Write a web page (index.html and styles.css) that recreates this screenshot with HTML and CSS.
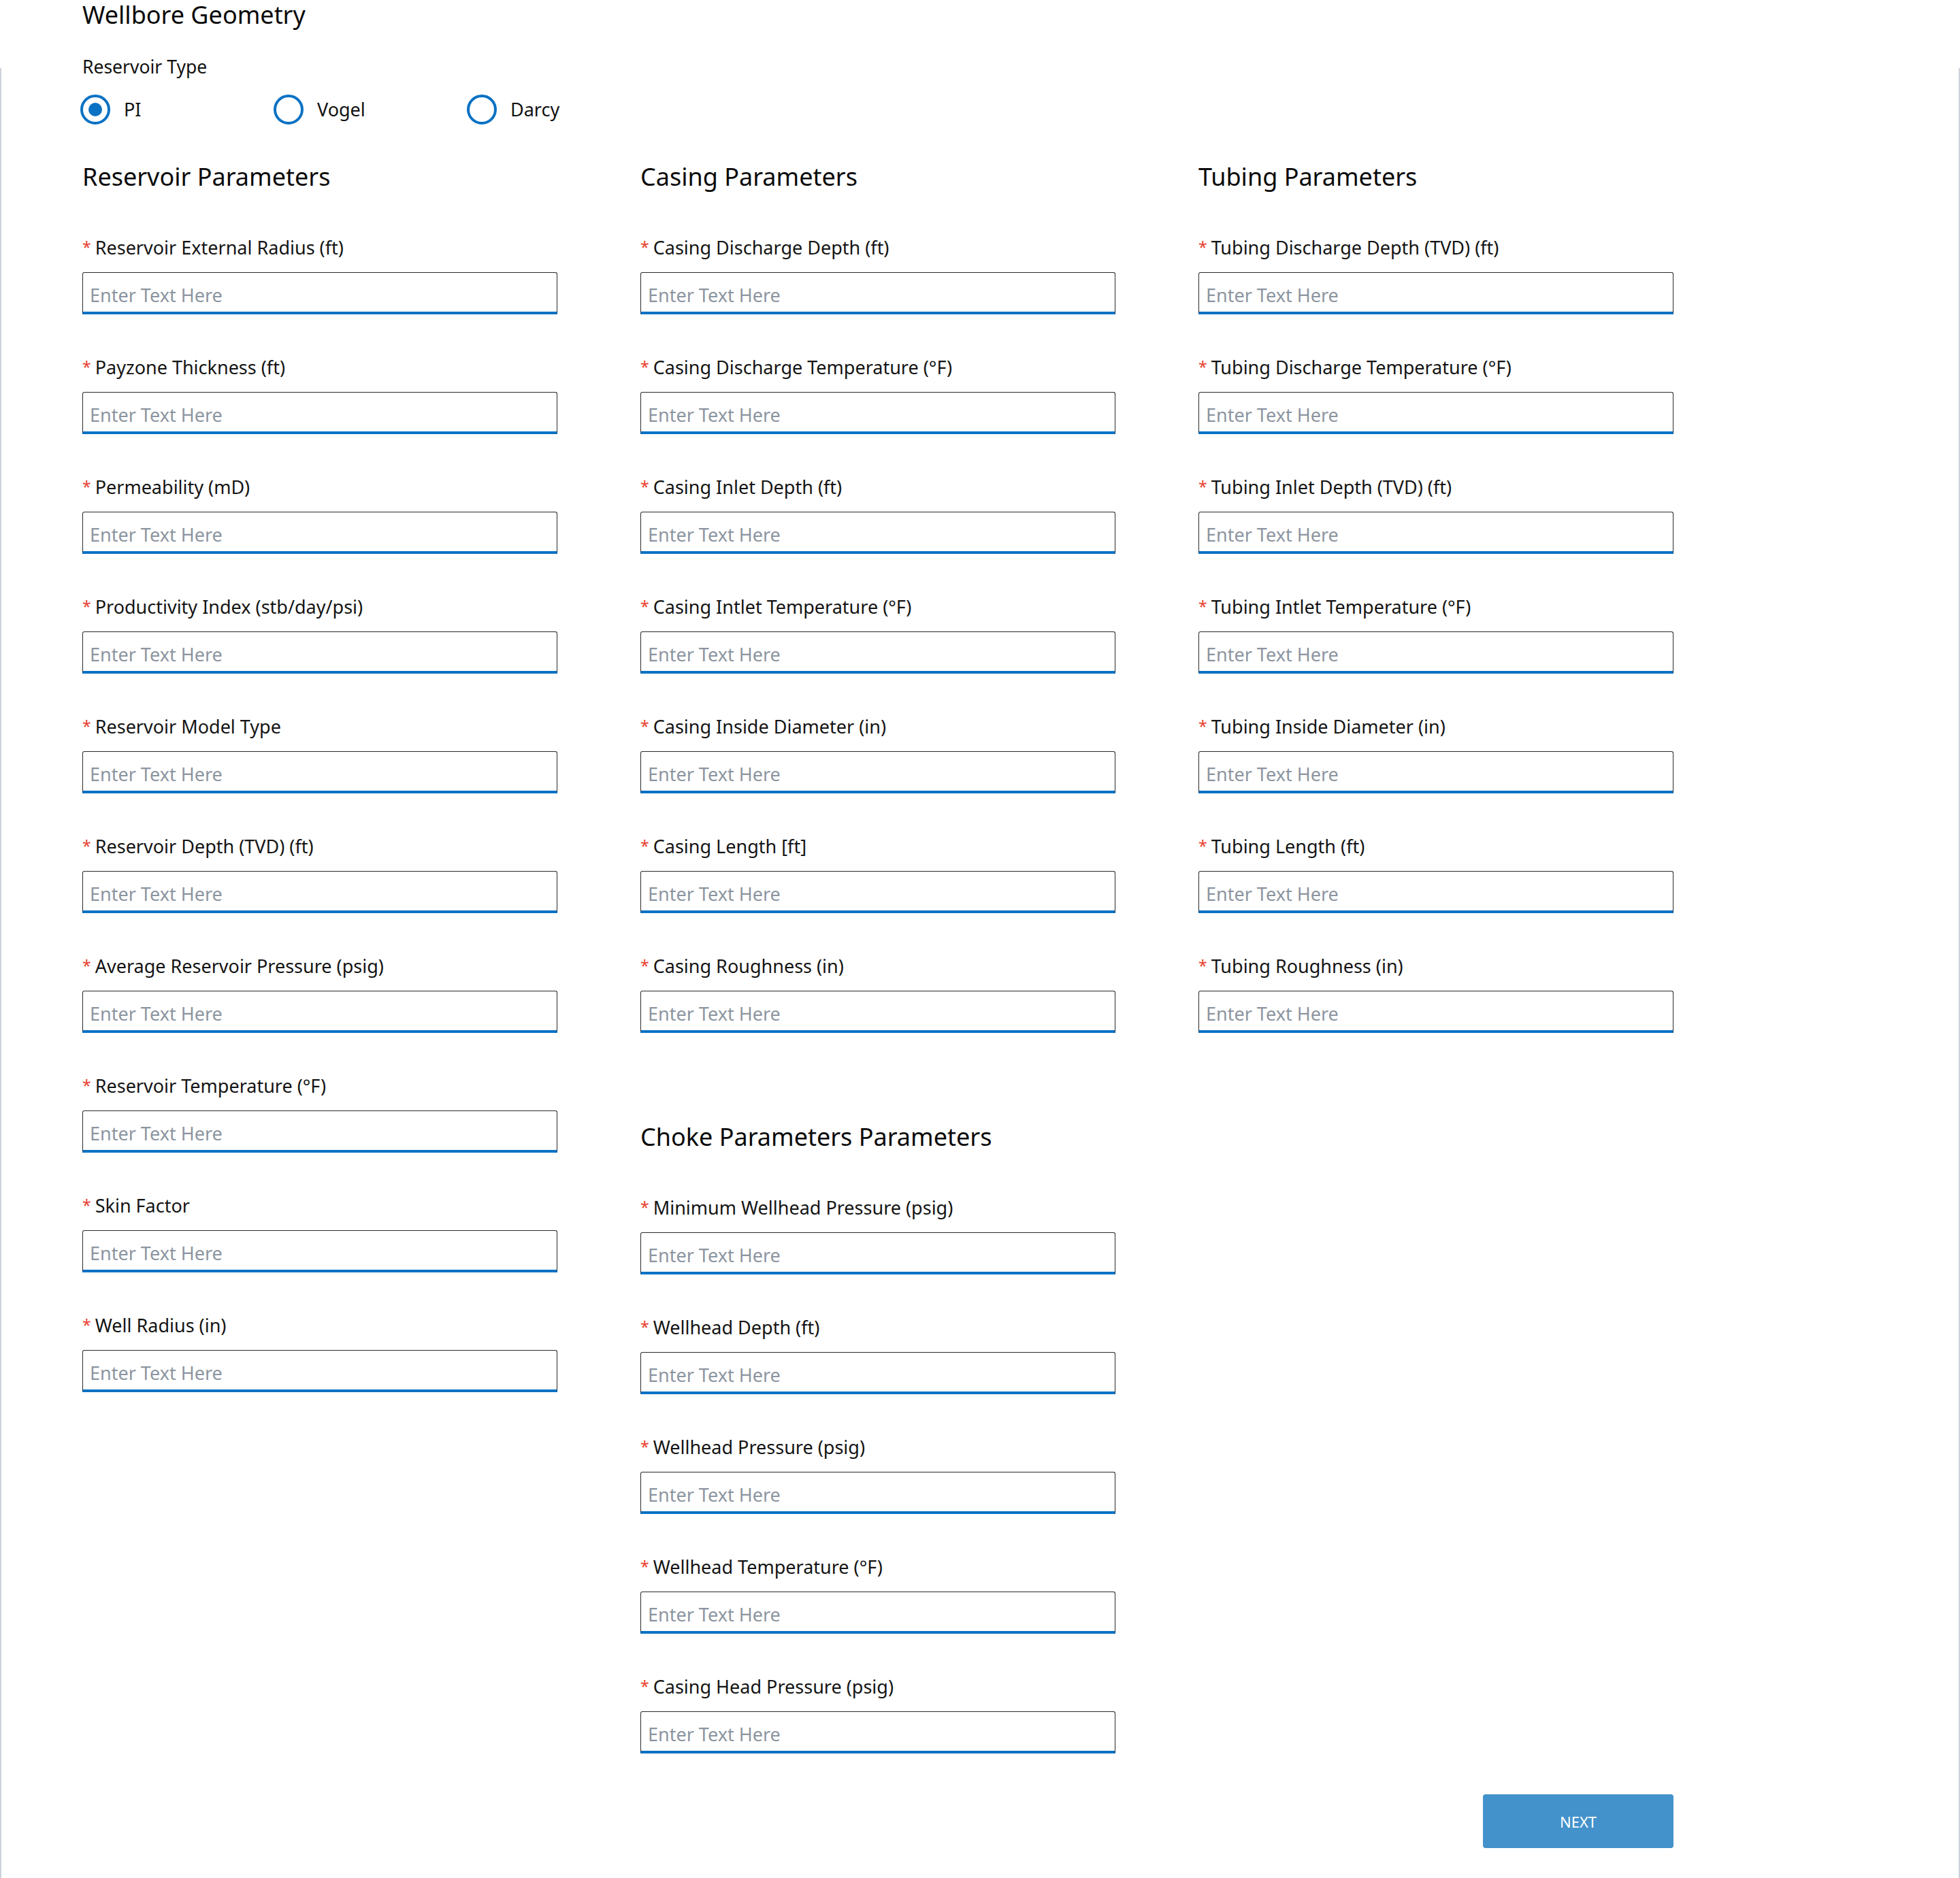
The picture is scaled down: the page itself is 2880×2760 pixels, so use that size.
FILE: index.html
```html
<!DOCTYPE html>
<html lang="en">
<head>
<meta charset="utf-8">
<title>Wellbore Geometry</title>
<link rel="stylesheet" href="styles.css">
</head>
<body>
<div class="page">
  <h1 class="title">Wellbore Geometry</h1>
  <div class="type-label">Reservoir Type</div>
  <div class="radios">
    <label class="radio-item"><span class="radio checked"><span class="dot"></span></span><span class="radio-text">PI</span></label>
    <label class="radio-item"><span class="radio"></span><span class="radio-text">Vogel</span></label>
    <label class="radio-item"><span class="radio"></span><span class="radio-text">Darcy</span></label>
  </div>

  <div class="columns">
    <section class="col">
      <h2 class="heading">Reservoir Parameters</h2>
      <div class="field"><div class="label"><span class="req">*</span>Reservoir External Radius (ft)</div><input class="input" placeholder="Enter Text Here"></div>
      <div class="field"><div class="label"><span class="req">*</span>Payzone Thickness (ft)</div><input class="input" placeholder="Enter Text Here"></div>
      <div class="field"><div class="label"><span class="req">*</span>Permeability (mD)</div><input class="input" placeholder="Enter Text Here"></div>
      <div class="field"><div class="label"><span class="req">*</span>Productivity Index (stb/day/psi)</div><input class="input" placeholder="Enter Text Here"></div>
      <div class="field"><div class="label"><span class="req">*</span>Reservoir Model Type</div><input class="input" placeholder="Enter Text Here"></div>
      <div class="field"><div class="label"><span class="req">*</span>Reservoir Depth (TVD) (ft)</div><input class="input" placeholder="Enter Text Here"></div>
      <div class="field"><div class="label"><span class="req">*</span>Average Reservoir Pressure (psig)</div><input class="input" placeholder="Enter Text Here"></div>
      <div class="field"><div class="label"><span class="req">*</span>Reservoir Temperature (°F)</div><input class="input" placeholder="Enter Text Here"></div>
      <div class="field"><div class="label"><span class="req">*</span>Skin Factor</div><input class="input" placeholder="Enter Text Here"></div>
      <div class="field"><div class="label"><span class="req">*</span>Well Radius (in)</div><input class="input" placeholder="Enter Text Here"></div>
    </section>

    <section class="col">
      <h2 class="heading">Casing Parameters</h2>
      <div class="field"><div class="label"><span class="req">*</span>Casing Discharge Depth (ft)</div><input class="input" placeholder="Enter Text Here"></div>
      <div class="field"><div class="label"><span class="req">*</span>Casing Discharge Temperature (°F)</div><input class="input" placeholder="Enter Text Here"></div>
      <div class="field"><div class="label"><span class="req">*</span>Casing Inlet Depth (ft)</div><input class="input" placeholder="Enter Text Here"></div>
      <div class="field"><div class="label"><span class="req">*</span>Casing Intlet Temperature (°F)</div><input class="input" placeholder="Enter Text Here"></div>
      <div class="field"><div class="label"><span class="req">*</span>Casing Inside Diameter (in)</div><input class="input" placeholder="Enter Text Here"></div>
      <div class="field"><div class="label"><span class="req">*</span>Casing Length [ft]</div><input class="input" placeholder="Enter Text Here"></div>
      <div class="field"><div class="label"><span class="req">*</span>Casing Roughness (in)</div><input class="input" placeholder="Enter Text Here"></div>

      <h2 class="heading heading-sub">Choke Parameters Parameters</h2>
      <div class="field"><div class="label"><span class="req">*</span>Minimum Wellhead Pressure (psig)</div><input class="input" placeholder="Enter Text Here"></div>
      <div class="field"><div class="label"><span class="req">*</span>Wellhead Depth (ft)</div><input class="input" placeholder="Enter Text Here"></div>
      <div class="field"><div class="label"><span class="req">*</span>Wellhead Pressure (psig)</div><input class="input" placeholder="Enter Text Here"></div>
      <div class="field"><div class="label"><span class="req">*</span>Wellhead Temperature (°F)</div><input class="input" placeholder="Enter Text Here"></div>
      <div class="field"><div class="label"><span class="req">*</span>Casing Head Pressure (psig)</div><input class="input" placeholder="Enter Text Here"></div>
    </section>

    <section class="col">
      <h2 class="heading">Tubing Parameters</h2>
      <div class="field"><div class="label"><span class="req">*</span>Tubing Discharge Depth (TVD) (ft)</div><input class="input" placeholder="Enter Text Here"></div>
      <div class="field"><div class="label"><span class="req">*</span>Tubing Discharge Temperature (°F)</div><input class="input" placeholder="Enter Text Here"></div>
      <div class="field"><div class="label"><span class="req">*</span>Tubing Inlet Depth (TVD) (ft)</div><input class="input" placeholder="Enter Text Here"></div>
      <div class="field"><div class="label"><span class="req">*</span>Tubing Intlet Temperature (°F)</div><input class="input" placeholder="Enter Text Here"></div>
      <div class="field"><div class="label"><span class="req">*</span>Tubing Inside Diameter (in)</div><input class="input" placeholder="Enter Text Here"></div>
      <div class="field"><div class="label"><span class="req">*</span>Tubing Length (ft)</div><input class="input" placeholder="Enter Text Here"></div>
      <div class="field"><div class="label"><span class="req">*</span>Tubing Roughness (in)</div><input class="input" placeholder="Enter Text Here"></div>
    </section>
  </div>

  <div class="actions">
    <button class="next" type="button">NEXT</button>
  </div>
</div>
</body>
</html>
```

FILE: styles.css
```css
html, body {
  margin: 0;
  padding: 0;
  background: #ffffff;
}

body {
  font-family: "Noto Sans", "Open Sans", "Liberation Sans", sans-serif;
  color: #111111;
}

.page {
  position: relative;
  min-height: 2760px;
  box-sizing: border-box;
  padding-left: 121px;
  padding-top: 2px;
}

.page::before {
  content: "";
  position: absolute;
  top: 100px;
  bottom: 0;
  left: 0;
  right: 0;
  border-left: 2px solid #cdd3dd;
  border-right: 2px solid #cdd3dd;
  pointer-events: none;
}

.title {
  margin: 0;
  font-size: 36px;
  line-height: 40px;
  font-weight: 400;
  color: #0a0a0a;
}

.type-label {
  margin-top: 39px;
  font-size: 26.5px;
  line-height: 34px;
  color: #111111;
}

.radios {
  margin-top: 24px;
  display: flex;
  height: 44px;
  margin-left: -3px;
}

.radio-item {
  width: 284px;
  display: flex;
  align-items: center;
  gap: 20px;
}

.radio {
  width: 44px;
  height: 44px;
  box-sizing: border-box;
  border: 4px solid #0a72c4;
  border-radius: 50%;
  display: flex;
  align-items: center;
  justify-content: center;
  flex: none;
}

.dot {
  width: 20px;
  height: 20px;
  border-radius: 50%;
  background: #0a72c4;
}

.radio-text {
  font-size: 27px;
  line-height: 36px;
  color: #111111;
}

.columns {
  margin-top: 53px;
  display: grid;
  grid-template-columns: 698px 698px 698px;
  column-gap: 122px;
  align-items: start;
}

.heading {
  margin: 0 0 62px 0;
  font-size: 36px;
  line-height: 48px;
  font-weight: 400;
  color: #0a0a0a;
}

.heading-sub {
  margin-top: 129px;
}

.field {
  margin-bottom: 60px;
}

.label {
  height: 36px;
  font-size: 27px;
  line-height: 36px;
  margin-bottom: 18px;
  color: #141414;
  white-space: nowrap;
}

.req {
  color: #e8412f;
  font-size: 23px;
  line-height: 0;
  vertical-align: 2px;
  margin-right: 6px;
}

.input {
  display: block;
  width: 698px;
  height: 62px;
  box-sizing: border-box;
  margin: 0;
  padding: 7px 10px 0 10px;
  border: 1px solid #2a2a2a;
  border-bottom: 4px solid #0a72c4;
  border-radius: 3px 3px 0 0;
  font-family: "Noto Sans", "Open Sans", "Liberation Sans", sans-serif;
  font-size: 27px;
  color: #111111;
  background: #ffffff;
  outline: none;
}

.input::placeholder {
  color: #8c95a0;
  opacity: 1;
}

.actions {
  display: flex;
  justify-content: flex-end;
  width: 2338px;
}

.next {
  width: 280px;
  height: 79px;
  border: none;
  border-radius: 4px;
  background: #4392cb;
  color: #ffffff;
  font-family: "Noto Sans", "Open Sans", "Liberation Sans", sans-serif;
  font-size: 22px;
  letter-spacing: 0;
  cursor: pointer;
}
```
